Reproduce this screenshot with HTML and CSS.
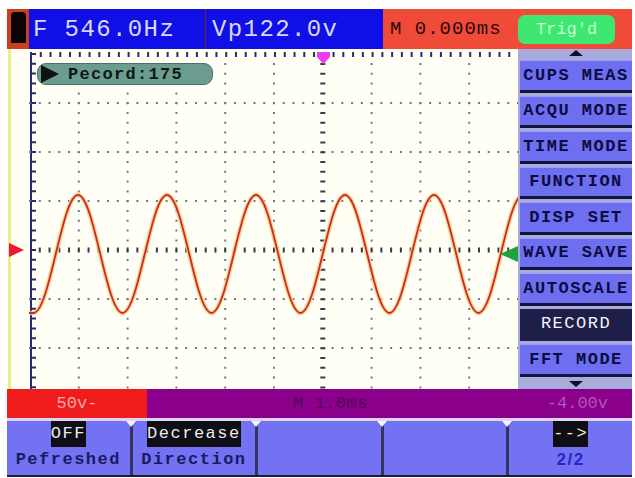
FILE: index.html
```html
<!DOCTYPE html>
<html lang="en">
<head>
    <meta charset="utf-8">
    <meta name="viewport" content="width=device-width, initial-scale=1.0">
    <title>Scope</title>
    <link rel="stylesheet" href="styles.css">
</head>
<body>
    <div class="scope">
        <div class="header">
            <div class="batt"><div class="batt-body"></div></div>
            <div class="readout freq">F 546.0Hz</div>
            <div class="readout vpp">Vp122.0v</div>
            <div class="timebase">
                <span class="delay">M 0.000ms</span>
                <span class="trig">Trig'd</span>
            </div>
        </div>
        <div class="main">
            <div class="side"><span class="ch-mark"></span></div>
            <div class="screen">
                <svg width="489" height="340" viewBox="0 0 489 340">
                    <!-- ruler and axis -->
                    <line x1="1" y1="5.5" x2="489" y2="5.5" stroke="#2a2a70" stroke-width="5" stroke-dasharray="2 7.76"/>
                    <line x1="2" y1="3" x2="2" y2="340" stroke="#2a2a70" stroke-width="2"/>
                    <line x1="4" y1="4" x2="4" y2="340" stroke="#2a2a70" stroke-width="6" stroke-dasharray="2 7.8"/>
                    <!-- grid -->
                    <g stroke="#6c7890" stroke-width="2" stroke-dasharray="2 7.76">
                        <line x1="0" y1="54" x2="489" y2="54"/>
                        <line x1="0" y1="103" x2="489" y2="103"/>
                        <line x1="0" y1="152" x2="489" y2="152"/>
                        <line x1="0" y1="250" x2="489" y2="250"/>
                        <line x1="0" y1="299" x2="489" y2="299"/>
                    </g>
                    <g stroke="#6c7890" stroke-width="2" stroke-dasharray="2 7.8">
                        <line x1="49.8" y1="14" x2="49.8" y2="340"/>
                        <line x1="98.6" y1="14" x2="98.6" y2="340"/>
                        <line x1="147.4" y1="14" x2="147.4" y2="340"/>
                        <line x1="196.2" y1="14" x2="196.2" y2="340"/>
                        <line x1="245" y1="14" x2="245" y2="340"/>
                        <line x1="342.6" y1="14" x2="342.6" y2="340"/>
                        <line x1="391.4" y1="14" x2="391.4" y2="340"/>
                        <line x1="440.2" y1="14" x2="440.2" y2="340"/>
                    </g>
                    <line x1="9.76" y1="201" x2="489" y2="201" stroke="#353b4c" stroke-width="5" stroke-dasharray="2 7.76"/>
                    <line x1="293.8" y1="14" x2="293.8" y2="340" stroke="#353b4c" stroke-width="5" stroke-dasharray="2 7.8"/>
                    <!-- waveform -->
                    <g fill="none" stroke-linejoin="round">
                        <path class="wave-halo" d="M0,264 L4.5,264 c8.05,0 15,-28.8 22.25,-59 c7.26,-30.2 14.2,-59 22.25,-59 c8.05,0 15,28.8 22.25,59 c7.26,30.2 14.2,59 22.25,59 c8.05,0 15,-28.8 22.25,-59 c7.26,-30.2 14.2,-59 22.25,-59 c8.05,0 15,28.8 22.25,59 c7.26,30.2 14.2,59 22.25,59 c8.05,0 15,-28.8 22.25,-59 c7.26,-30.2 14.2,-59 22.25,-59 c8.05,0 15,28.8 22.25,59 c7.26,30.2 14.2,59 22.25,59 c8.05,0 15,-28.8 22.25,-59 c7.26,-30.2 14.2,-59 22.25,-59 c8.05,0 15,28.8 22.25,59 c7.26,30.2 14.2,59 22.25,59 c8.05,0 15,-28.8 22.25,-59 c7.26,-30.2 14.2,-59 22.25,-59 c8.05,0 15,28.8 22.25,59 c7.26,30.2 14.2,59 22.25,59 c8.05,0 15,-28.8 22.25,-59 c7.26,-30.2 14.2,-59 22.25,-59"/>
                        <path class="wave" d="M0,264 L4.5,264 c8.05,0 15,-28.8 22.25,-59 c7.26,-30.2 14.2,-59 22.25,-59 c8.05,0 15,28.8 22.25,59 c7.26,30.2 14.2,59 22.25,59 c8.05,0 15,-28.8 22.25,-59 c7.26,-30.2 14.2,-59 22.25,-59 c8.05,0 15,28.8 22.25,59 c7.26,30.2 14.2,59 22.25,59 c8.05,0 15,-28.8 22.25,-59 c7.26,-30.2 14.2,-59 22.25,-59 c8.05,0 15,28.8 22.25,59 c7.26,30.2 14.2,59 22.25,59 c8.05,0 15,-28.8 22.25,-59 c7.26,-30.2 14.2,-59 22.25,-59 c8.05,0 15,28.8 22.25,59 c7.26,30.2 14.2,59 22.25,59 c8.05,0 15,-28.8 22.25,-59 c7.26,-30.2 14.2,-59 22.25,-59 c8.05,0 15,28.8 22.25,59 c7.26,30.2 14.2,59 22.25,59 c8.05,0 15,-28.8 22.25,-59 c7.26,-30.2 14.2,-59 22.25,-59"/>
                    </g>
                    <!-- markers -->
                    <polygon points="288,3 301,3 301,8 294.5,15 288,8" fill="#f03cf0"/>
                    <polygon points="471,205 489,197 489,213" fill="#1ea23e"/>
                </svg>
                <div class="record"><span class="play"></span>Pecord:175</div>
            </div>
            <div class="menu">
                <div class="arrow up"></div>
                <div class="item">CUPS MEAS</div>
                <div class="item">ACQU MODE</div>
                <div class="item">TIME MODE</div>
                <div class="item">FUNCTION</div>
                <div class="item">DISP SET</div>
                <div class="item">WAVE SAVE</div>
                <div class="item">AUTOSCALE</div>
                <div class="item active">RECORD</div>
                <div class="item">FFT MODE</div>
                <div class="arrow down"></div>
            </div>
        </div>
        <div class="status">
            <div class="ch1">50v-</div>
            <div class="tb">M 1.0ms</div>
            <div class="offset">-4.00v</div>
        </div>
        <div class="keys">
            <div class="key"><span class="hl">OFF</span><span>Pefreshed</span></div>
            <div class="key"><span class="hl">Decrease</span><span>Direction</span></div>
            <div class="key"></div>
            <div class="key"></div>
            <div class="key"><span class="hl arrow-txt">--&gt;</span><span class="page">2/2</span></div>
        </div>
    </div>
</body>
</html>
```

FILE: styles.css
```css
body{
    margin: 0;
    background-color: #fff;
    font-family: "Liberation Mono", "DejaVu Sans Mono", monospace;
}
.scope{
    width: 625px;
    margin: 9px 0 0 7px;
}
.header{
    display: flex;
    height: 40px;
}
.batt{
    width: 22px;
    box-sizing: border-box;
    padding-top: 3px;
    background-color: #c8401e;
    display: flex;
    justify-content: center;
}
.batt-body{
    width: 15px;
    height: 31px;
    background-color: #0c0404;
    border-radius: 4px 4px 1px 1px;
}
.readout{
    display: flex;
    align-items: center;
    box-sizing: border-box;
    background-color: #1010e6;
    color: #d8d8ff;
    font-size: 24px;
    letter-spacing: 1.4px;
}
.freq{
    width: 177px;
    padding-left: 4px;
    border-right: 1px solid #7a2030;
}
.vpp{
    width: 177px;
    padding-left: 6px;
}
.timebase{
    flex: 1;
    display: flex;
    align-items: center;
    padding-left: 7px;
    background-color: #f04a38;
}
.delay{
    font-size: 19px;
    letter-spacing: 1px;
    color: #2a0808;
}
.trig{
    margin-left: auto;
    margin-right: 17px;
    width: 97px;
    height: 29px;
    border-radius: 7px;
    background-color: #3ee672;
    color: #c4ffcc;
    font-size: 17px;
    display: flex;
    align-items: center;
    justify-content: center;
}
.main{
    display: flex;
    height: 340px;
}
.side{
    position: relative;
    width: 22px;
    background: linear-gradient(to right, #fff 1px, #ecee86 1px, #ecee86 4px, #fffff6 4px);
}
.ch-mark{
    position: absolute;
    left: 2px;
    top: 194px;
    width: 0;
    height: 0;
    border-left: 15px solid #f01830;
    border-top: 7px solid transparent;
    border-bottom: 7px solid transparent;
}
.screen{
    position: relative;
    width: 489px;
    background-color: #fffff6;
}
.screen svg{
    display: block;
}
.wave-halo{
    stroke: #ffcf70;
    stroke-width: 4.5;
    opacity: 0.85;
}
.wave{
    stroke: #c8283a;
    stroke-width: 1.8;
}
.record{
    position: absolute;
    left: 8px;
    top: 14px;
    width: 176px;
    height: 22px;
    box-sizing: border-box;
    display: flex;
    align-items: center;
    gap: 9px;
    padding-left: 3px;
    border: 1px solid #4c7268;
    border-radius: 9px;
    background-color: #6c9c90;
    color: #0a1a14;
    font-size: 17px;
    font-weight: bold;
    letter-spacing: 1.3px;
}
.play{
    width: 0;
    height: 0;
    border-left: 18px solid #0c1410;
    border-top: 9px solid transparent;
    border-bottom: 9px solid transparent;
}
.menu{
    width: 114px;
    box-sizing: border-box;
    padding-left: 2px;
    display: flex;
    flex-direction: column;
    gap: 3px;
    background-color: #a8acdc;
}
.arrow{
    height: 8px;
    display: flex;
    align-items: center;
    justify-content: center;
}
.arrow::after{
    content: "";
    width: 0;
    height: 0;
    border-left: 7px solid transparent;
    border-right: 7px solid transparent;
}
.up::after{
    border-bottom: 6px solid #101024;
}
.down::after{
    border-top: 6px solid #101024;
}
.item{
    height: 32.5px;
    box-sizing: border-box;
    display: flex;
    align-items: center;
    justify-content: center;
    white-space: nowrap;
    background-color: #6e6ef0;
    border-top: 1px solid #9c9cff;
    border-bottom: 3px solid #14143a;
    color: #0c0c40;
    font-size: 17px;
    font-weight: bold;
    letter-spacing: 1.5px;
}
.item.active{
    background-color: #1e1e48;
    border-color: #1e1e48;
    color: #f4f4ff;
    font-weight: normal;
}
.status{
    display: flex;
    align-items: center;
    height: 29px;
    background-color: #8a008a;
    font-size: 17px;
}
.ch1{
    width: 140px;
    height: 100%;
    display: flex;
    align-items: center;
    justify-content: center;
    background-color: #f01c1c;
    color: #ffa8a8;
}
.tb{
    margin-left: 146px;
    color: #52085a;
    letter-spacing: 0.5px;
}
.offset{
    margin-left: auto;
    margin-right: 24px;
    color: #b254b8;
}
.keys{
    display: grid;
    grid-template-columns: repeat(5, 1fr);
    gap: 3px;
    height: 54px;
    background-color: #34345c;
    border-top: 3px solid #dcd4f2;
    border-bottom: 2px solid #1c1c30;
}
.key{
    position: relative;
    display: flex;
    flex-direction: column;
    align-items: center;
    background-color: #7272f2;
    color: #1a1a62;
    font-size: 17px;
    font-weight: bold;
    letter-spacing: 1.5px;
    line-height: 26px;
}
.key + .key::before{
    content: "";
    position: absolute;
    left: -7px;
    top: 0;
    border-left: 5.5px solid transparent;
    border-right: 5.5px solid transparent;
    border-top: 6px solid #f4f4ff;
}
.hl{
    background-color: #0e0e14;
    color: #ececec;
    font-weight: normal;
}
.arrow-txt{
    color: #f4f0d0;
}
.page{
    font-family: "Liberation Sans", Arial, sans-serif;
    color: #2626c8;
}
```
